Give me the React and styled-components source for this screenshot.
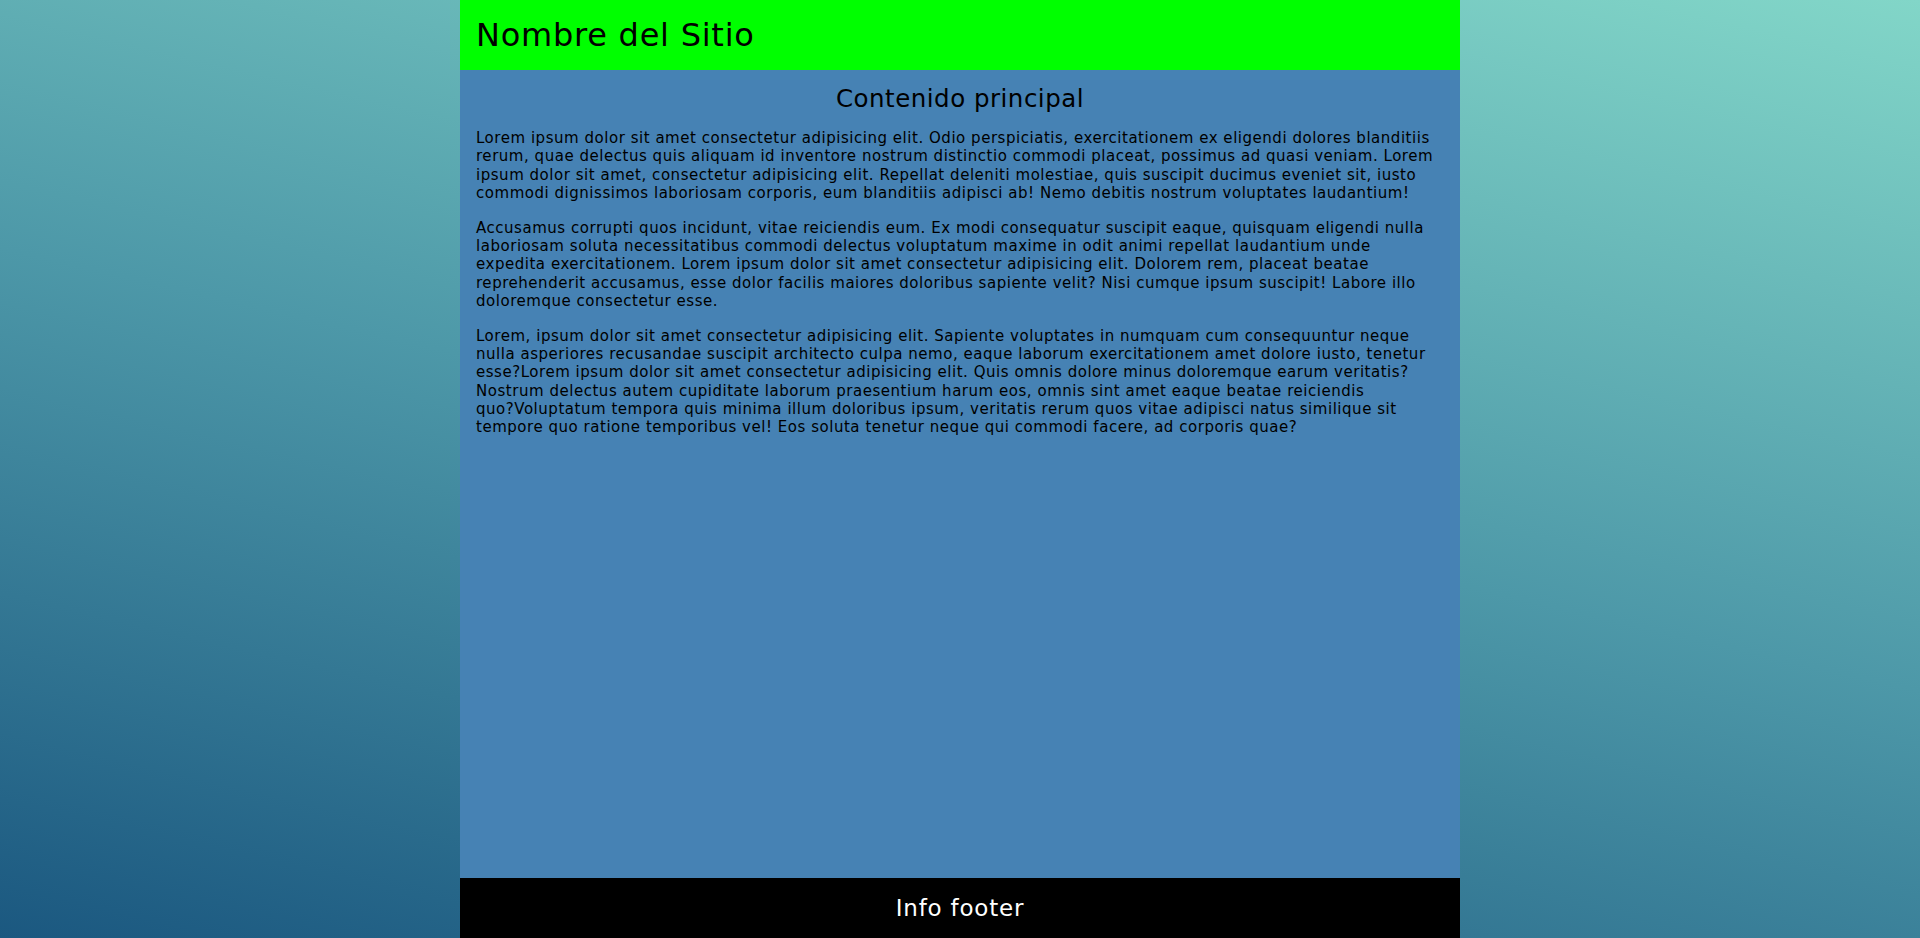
import React from "react";
import styled, { createGlobalStyle } from "styled-components";

const GlobalStyle = createGlobalStyle`
  html, body { margin: 0; padding: 0; height: 100%; }
  body {
    background: linear-gradient(13deg, #1b5880 0%, #4d98a8 50%, #82d6c8 100%);
    font-family: "DejaVu Sans", "Liberation Sans", sans-serif;
  }
  #root { min-height: 100vh; }
`;

const Page = styled.div`
  width: 1000px;
  margin: 0 auto;
  min-height: 100vh;
  display: grid;
  grid-template-rows: 70px 1fr 60px;
`;

const Header = styled.header`
  background: #00ff00;
  display: flex;
  align-items: center;
  padding: 0 16px;
`;

const SiteName = styled.h1`
  margin: 0;
  font-weight: 400;
  font-size: 32px;
  letter-spacing: 0.75px;
  color: #000;
`;

const Main = styled.main`
  background: #4682b4;
  padding: 14px 16px 10px;
`;

const Title = styled.h2`
  margin: 0 0 16px;
  text-align: center;
  font-weight: 400;
  font-size: 24.5px;
  letter-spacing: 0.5px;
  color: #000;
`;

const Paragraph = styled.p`
  margin: 0 0 16.5px;
  font-size: 15px;
  letter-spacing: 0.53px;
  line-height: 18.3px;
  color: #000;
`;

const Footer = styled.footer`
  background: #000;
  color: #fff;
  display: flex;
  align-items: center;
  justify-content: center;
  font-size: 23px;
  letter-spacing: 0.8px;
`;

const paragraphs = [
  "Lorem ipsum dolor sit amet consectetur adipisicing elit. Odio perspiciatis, exercitationem ex eligendi dolores blanditiis rerum, quae delectus quis aliquam id inventore nostrum distinctio commodi placeat, possimus ad quasi veniam. Lorem ipsum dolor sit amet, consectetur adipisicing elit. Repellat deleniti molestiae, quis suscipit ducimus eveniet sit, iusto commodi dignissimos laboriosam corporis, eum blanditiis adipisci ab! Nemo debitis nostrum voluptates laudantium!",
  "Accusamus corrupti quos incidunt, vitae reiciendis eum. Ex modi consequatur suscipit eaque, quisquam eligendi nulla laboriosam soluta necessitatibus commodi delectus voluptatum maxime in odit animi repellat laudantium unde expedita exercitationem. Lorem ipsum dolor sit amet consectetur adipisicing elit. Dolorem rem, placeat beatae reprehenderit accusamus, esse dolor facilis maiores doloribus sapiente velit? Nisi cumque ipsum suscipit! Labore illo doloremque consectetur esse.",
  "Lorem, ipsum dolor sit amet consectetur adipisicing elit. Sapiente voluptates in numquam cum consequuntur neque nulla asperiores recusandae suscipit architecto culpa nemo, eaque laborum exercitationem amet dolore iusto, tenetur esse?\u2060Lorem ipsum dolor sit amet consectetur adipisicing elit. Quis omnis dolore minus doloremque earum veritatis? Nostrum delectus autem cupiditate laborum praesentium harum eos, omnis sint amet eaque beatae reiciendis quo?\u2060Voluptatum tempora quis minima illum doloribus ipsum, veritatis rerum quos vitae adipisci natus similique sit tempore quo ratione temporibus vel! Eos soluta tenetur neque qui commodi facere, ad corporis quae?",
];

export default function App() {
  return (
    <>
      <GlobalStyle />
      <Page>
        <Header>
          <SiteName>Nombre del Sitio</SiteName>
        </Header>
        <Main>
          <Title>Contenido principal</Title>
          {paragraphs.map((t, i) => (
            <Paragraph key={i}>{t}</Paragraph>
          ))}
        </Main>
        <Footer>Info footer</Footer>
      </Page>
    </>
  );
}
